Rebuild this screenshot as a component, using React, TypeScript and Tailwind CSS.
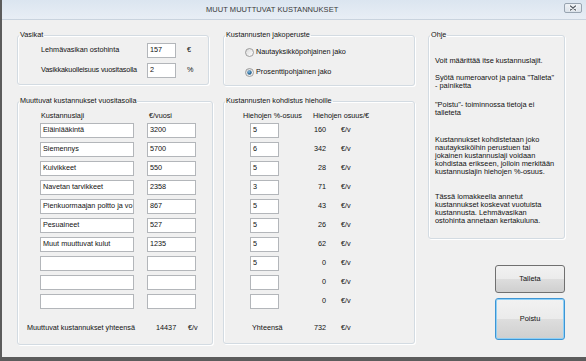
import React from "react";

const rows: [string, string, string, string][] = [
  ["Eläinlääkintä", "3200", "5", "160"],
  ["Siemennys", "5700", "6", "342"],
  ["Kuivikkeet", "550", "5", "28"],
  ["Navetan tarvikkeet", "2358", "3", "71"],
  ["Pienkuormaajan poltto ja vo", "867", "5", "43"],
  ["Pesuaineet", "527", "5", "26"],
  ["Muut muuttuvat kulut", "1235", "5", "62"],
  ["", "", "5", "0"],
  ["", "", "", "0"],
  ["", "", "", "0"],
];

function Field({ value, className }: { value: string; className: string }) {
  return (
    <div
      className={
        "h-[15px] shrink-0 bg-white border border-[#b3b6ba] flex items-center pl-[2px] overflow-hidden whitespace-nowrap " +
        className
      }
    >
      {value}
    </div>
  );
}

function Group({
  title,
  className,
  children,
}: {
  title: string;
  className: string;
  children?: React.ReactNode;
}) {
  return (
    <fieldset
      className={
        "border border-[#d3dbe2] rounded-[3px] shadow-[inset_1px_1px_0_#ffffff,1px_1px_0_#ffffff] min-w-0 " +
        className
      }
    >
      <legend className="ml-[1px] px-[1px] leading-[10px]">{title}</legend>
      {children}
    </fieldset>
  );
}

function Radio({ checked }: { checked?: boolean }) {
  return (
    <svg width="9" height="9" viewBox="0 0 9 9" className="shrink-0">
      <defs>
        <linearGradient id="rg" x1="0" y1="0" x2="1" y2="1">
          <stop offset="0" stopColor="#d8d8d8" />
          <stop offset="1" stopColor="#ffffff" />
        </linearGradient>
        <radialGradient id="rd" cx="0.4" cy="0.35" r="0.7">
          <stop offset="0" stopColor="#8fc3e6" />
          <stop offset="0.6" stopColor="#2f6f9f" />
          <stop offset="1" stopColor="#1b4f78" />
        </radialGradient>
      </defs>
      <circle cx="4.5" cy="4.5" r="4" fill="url(#rg)" stroke="#8a8a8a" strokeWidth="0.8" />
      {checked && <circle cx="4.5" cy="4.5" r="2.2" fill="url(#rd)" />}
    </svg>
  );
}

export default function App() {
  return (
    <div className="w-[586px] h-[361px] overflow-hidden bg-[#f0f0f0] border-l-2 border-b-4 border-[#5c5c5c] flex flex-col font-['Liberation_Sans',Arial,sans-serif] text-[7.25px] text-[#111]">
      {/* title bar */}
      <div className="h-[20px] shrink-0 flex items-start border-b border-[#c9d3de] bg-gradient-to-b from-[#dbe5f0] to-[#e8eef5]">
        <div className="pl-[204px] pt-[5px] text-[7.5px] leading-[9px] text-[#3a3a3a] tracking-[0.05px]">
          MUUT MUUTTUVAT KUSTANNUKSET
        </div>
        <div className="ml-auto mr-[4px] mt-[3px] w-[18px] h-[10px] rounded-[2px] border border-[#98a4b1] bg-gradient-to-b from-[#eef2f6] to-[#dce3ea] flex items-center justify-center">
          <svg width="8" height="6" viewBox="0 0 8 6">
            <path d="M1.5 1 L6.5 5 M6.5 1 L1.5 5" stroke="#ffffff" strokeWidth="2.6" strokeLinecap="round" />
            <path d="M1.5 1 L6.5 5 M6.5 1 L1.5 5" stroke="#555d66" strokeWidth="1.3" strokeLinecap="round" />
          </svg>
        </div>
      </div>

      {/* body */}
      <div className="flex items-start pt-[10px]">
        {/* column 1 */}
        <div className="ml-[15px] w-[196px] flex flex-col">
          <Group title="Vasikat" className="w-[192px] h-[55px]">
            <div className="pl-[23px] pt-[3px] flex flex-col gap-[5px]">
              <div className="flex items-center h-[15px]">
                <div className="w-[106px] whitespace-nowrap">Lehmävasikan ostohinta</div>
                <Field value="157" className="w-[29px]" />
                <div className="ml-[11px]">€</div>
              </div>
              <div className="flex items-center h-[15px]">
                <div className="w-[106px] whitespace-nowrap tracking-[-0.15px]">Vasikkakuolleisuus vuositasolla</div>
                <Field value="2" className="w-[29px]" />
                <div className="ml-[11px]">%</div>
              </div>
            </div>
          </Group>

          <Group title="Muuttuvat kustannukset vuositasolla" className="mt-[11px] w-[196px] h-[249px]">
            <div className="pl-[22px] mt-[5px] flex items-center leading-[9px] h-[9px]">
              <div className="w-[108px] pl-[1px]">Kustannuslaji</div>
              <div className="pl-[1px]">€/vuosi</div>
            </div>
            <div className="pl-[22px] mt-[3px] flex flex-col gap-[4px]">
              {rows.map((r, i) => (
                <div key={i} className="flex">
                  <Field value={r[0]} className="w-[94px]" />
                  <Field value={r[1]} className="ml-[13px] w-[49px]" />
                </div>
              ))}
            </div>
            <div className="pl-[9px] mt-[14px] flex items-center leading-[9px] h-[9px]">
              <div className="w-[129px] whitespace-nowrap">Muuttuvat kustannukset yhteensä</div>
              <div className="w-[32px]">14437</div>
              <div>€/v</div>
            </div>
          </Group>
        </div>

        {/* column 2 */}
        <div className="ml-[10px] w-[192px] flex flex-col">
          <Group title="Kustannusten jakoperuste" className="w-[192px] h-[56px]">
            <div className="pl-[21px] pt-[7px] flex flex-col gap-[10px]">
              <div className="flex items-center h-[10px]">
                <Radio />
                <span className="ml-[2px]">Nautayksikköpohjainen jako</span>
              </div>
              <div className="flex items-center h-[10px]">
                <Radio checked />
                <span className="ml-[2px]">Prosenttipohjainen jako</span>
              </div>
            </div>
          </Group>

          <Group title="Kustannusten kohdistus hiehoille" className="mt-[10px] w-[192px] h-[248px]">
            <div className="pl-[19px] mt-[5px] flex items-center leading-[9px] h-[9px]">
              <div className="w-[70px]">Hiehojen %-osuus</div>
              <div>Hiehojen osuus/€</div>
            </div>
            <div className="pl-[26px] mt-[3px] flex flex-col gap-[4px]">
              {rows.map((r, i) => (
                <div key={i} className="flex items-center">
                  <Field value={r[2]} className="w-[29px]" />
                  <div className="w-[47px] text-right">{r[3]}</div>
                  <div className="ml-[15px]">€/v</div>
                </div>
              ))}
            </div>
            <div className="pl-[26px] mt-[14px] flex items-center leading-[9px] h-[9px]">
              <div className="w-[29px] pl-[2px] whitespace-nowrap">Yhteensä</div>
              <div className="w-[47px] text-right">732</div>
              <div className="ml-[15px]">€/v</div>
            </div>
          </Group>
        </div>

        {/* column 3 */}
        <div className="ml-[13px] w-[137px] flex flex-col">
          <Group title="Ohje" className="w-[137px] h-[209px]">
            <div className="pl-[6px] leading-[8px] whitespace-nowrap text-[7.4px]">
              <p className="mt-[17px]">Voit määrittää itse kustannuslajit.</p>
              <p className="mt-[9px]">
                Syötä numeroarvot ja paina "Talleta"
                <br />- painiketta
              </p>
              <p className="mt-[11px]">
                "Poistu"- toiminnossa tietoja ei
                <br />
                talleteta
              </p>
              <p className="mt-[19px]">
                Kustannukset kohdistetaan joko
                <br />
                nautayksiköihin perustuen tai
                <br />
                jokainen kustannuslaji voidaan
                <br />
                kohdistaa erikseen, jolloin merkitään
                <br />
                kustannuslajin hiehojen %-osuus.
              </p>
              <p className="mt-[17px]">
                Tässä lomakkeella annetut
                <br />
                kustannukset koskevat vuotuista
                <br />
                kustannusta. Lehmävasikan
                <br />
                ostohinta annetaan kertakuluna.
              </p>
            </div>
          </Group>

          <button className="self-end mt-[26px] w-[70px] h-[28px] rounded-[3px] border border-[#707070] bg-[linear-gradient(to_bottom,#f2f2f2_0%,#ebebeb_50%,#dddddd_51%,#cfcfcf_100%)] text-[7.4px] text-[#111] flex items-center justify-center">
            Talleta
          </button>
          <button className="self-end mt-[5px] w-[70px] h-[42px] rounded-[3px] border border-[#3d95d4] shadow-[inset_0_0_0_1px_#8fd0f6] bg-[linear-gradient(to_bottom,#f2f2f2_0%,#ebebeb_50%,#dddddd_51%,#cfcfcf_100%)] text-[7.4px] text-[#111] flex items-center justify-center">
            Poistu
          </button>
        </div>
      </div>
    </div>
  );
}
